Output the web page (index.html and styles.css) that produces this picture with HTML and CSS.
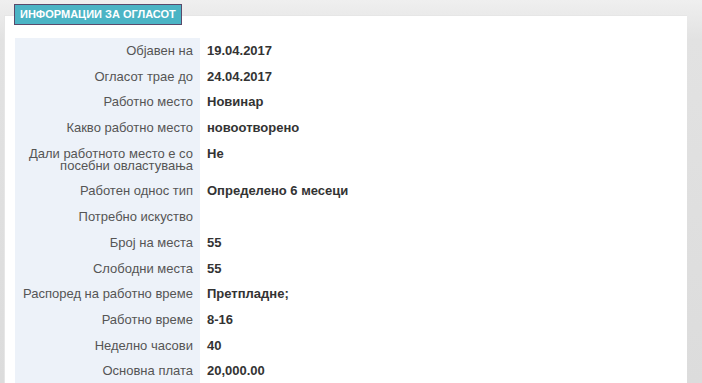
FILE: index.html
```html
<!DOCTYPE html>
<html lang="mk">
<head>
<meta charset="utf-8">
<title>Информации за огласот</title>
<link rel="stylesheet" href="styles.css">
</head>
<body>
<div class="page">
  <section class="panel">
    <h2 class="badge">ИНФОРМАЦИИ ЗА ОГЛАСОТ</h2>
    <table class="info">
      <tr><th>Објавен на</th><td>19.04.2017</td></tr>
      <tr><th>Огласот трае до</th><td>24.04.2017</td></tr>
      <tr><th>Работно место</th><td>Новинар</td></tr>
      <tr><th>Какво работно место</th><td>новоотворено</td></tr>
      <tr><th>Дали работното место е со посебни овластувања</th><td>Не</td></tr>
      <tr><th>Работен однос тип</th><td>Определено 6 месеци</td></tr>
      <tr><th>Потребно искуство</th><td></td></tr>
      <tr><th>Број на места</th><td>55</td></tr>
      <tr><th>Слободни места</th><td>55</td></tr>
      <tr><th>Распоред на работно време</th><td>Претпладне;</td></tr>
      <tr><th>Работно време</th><td>8-16</td></tr>
      <tr><th>Неделно часови</th><td>40</td></tr>
      <tr><th>Основна плата</th><td>20,000.00</td></tr>
    </table>
  </section>
</div>
</body>
</html>
```

FILE: styles.css
```css
html, body {
  margin: 0;
  padding: 0;
}
body {
  background: linear-gradient(to bottom, #efefef 0, #e2e2e2 40px, #dcdcdc 100%);
  font-family: "Liberation Sans", Arial, sans-serif;
  height: 383px;
  overflow: hidden;
}
.page {
  padding: 15px 0 0 4px;
}
.panel {
  position: relative;
  width: 683px;
  background: #ffffff;
  border-top: 1px solid #e6e6e6;
  border-left: 1px solid #e6e6e6;
  padding: 22px 0 40px 10px;
  box-sizing: border-box;
  min-height: 400px;
}
.badge {
  position: absolute;
  top: -12px;
  left: 9px;
  margin: 0;
  padding: 3px 5px;
  background: #4bb4c5;
  border: 1px solid #5a4a6b;
  color: #ffffff;
  font-size: 11px;
  font-weight: bold;
  line-height: 13px;
}
.info {
  border-collapse: collapse;
  font-size: 13px;
}
.info th,
.info td {
  vertical-align: top;
  padding: 7px 7px 6.7px 7px;
  line-height: 12px;
}
.info th {
  width: 185px;
  box-sizing: border-box;
  background: #edf2f9;
  color: #555555;
  font-weight: normal;
  text-align: right;
}
.info td {
  color: #333333;
  font-weight: bold;
}
```
